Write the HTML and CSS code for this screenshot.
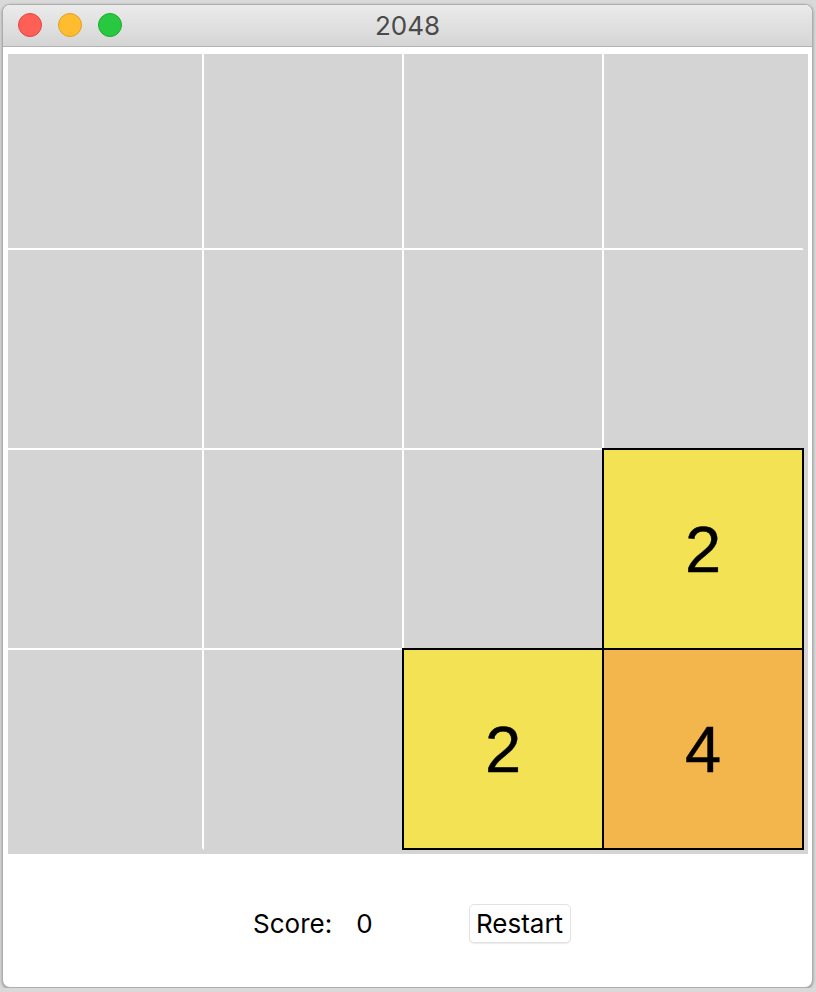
FILE: index.html
```html
<!doctype html>
<html lang="en">
<head>
    <meta charset="UTF-8">
    <title>2048</title>
    <link rel="stylesheet" href="styles.css">
</head>
<body>
    <div id="window">
        <div id="titlebar">
            <div id="lights">
                <span class="light red"></span>
                <span class="light yellow"></span>
                <span class="light green"></span>
            </div>
            <div id="title">2048</div>
        </div>
        <div id="content">
            <div id="board">
                <div class="cell"></div>
                <div class="cell"></div>
                <div class="cell"></div>
                <div class="cell"></div>

                <div class="cell"></div>
                <div class="cell"></div>
                <div class="cell"></div>
                <div class="cell"></div>

                <div class="cell"></div>
                <div class="cell"></div>
                <div class="cell"></div>
                <div class="cell tile t2">2</div>

                <div class="cell"></div>
                <div class="cell"></div>
                <div class="cell tile t2">2</div>
                <div class="cell tile t4">4</div>
            </div>
            <div id="footer">
                <span id="score-label">Score:</span>
                <span id="score">0</span>
                <button id="restart">Restart</button>
            </div>
        </div>
    </div>
</body>
</html>
```

FILE: styles.css
```css
*{
    margin:0;
    padding:0;
    box-sizing: border-box;
}
body{
    background: #d9d9d9;
    font-family: Inter, "Noto Sans", sans-serif;
}
#window{
    margin: 4px 0 0 2px;
    width: 811px;
    height: 984px;
    background: #ffffff;
    border: 1px solid #aeaeae;
    border-radius: 8px;
    overflow: hidden;
    box-shadow: 0 1px 3px rgba(0,0,0,0.35);
}
#titlebar{
    position: relative;
    height: 42px;
    background: linear-gradient(#ebebeb, #d5d5d5);
    border-bottom: 1px solid #b3b3b3;
    display: flex;
    align-items: center;
    justify-content: center;
}
#lights{
    position: absolute;
    left: 15px;
    top: 8px;
    display: flex;
    gap: 16px;
}
.light{
    width: 24px;
    height: 24px;
    border-radius: 50%;
}
.red{
    background: #fe5f57;
    border: 1px solid #e1463f;
}
.yellow{
    background: #febc2e;
    border: 1px solid #dfa023;
}
.green{
    background: #28c840;
    border: 1px solid #1cac2c;
}
#title{
    font-size: 26px;
    color: #4a4a4a;
}
#content{
    padding: 7px 0 0 5px;
}
#board{
    width: 800px;
    height: 800px;
    background: #d4d4d4;
    display: grid;
    grid-template-columns: 196px 200px 200px 200px;
    grid-template-rows: 196px 200px 200px 200px;
}
.cell{
    border-right: 2px solid #ffffff;
    border-bottom: 2px solid #ffffff;
}
.cell:nth-child(4n){
    border-right-color: transparent;
}
.cell:nth-child(n+13){
    border-bottom-color: transparent;
}
.tile{
    margin: -2px 0 0 -2px;
    border: 2px solid #000000 !important;
    display: flex;
    align-items: center;
    justify-content: center;
    font-family: "Liberation Sans", Arial, sans-serif;
    font-size: 65px;
    color: #000000;
    -webkit-text-stroke: 0.4px #000000;
}
.t2{
    background: #f3e253;
}
.t4{
    background: #f3b64c;
}
#footer{
    margin-top: 50px;
    padding-left: 245px;
    display: flex;
    align-items: center;
    font-size: 26px;
    color: #000000;
}
#score{
    margin-left: 24px;
    margin-right: 96px;
}
#restart{
    font-family: inherit;
    font-size: 26px;
    width: 102px;
    height: 39px;
    background: #ffffff;
    border: 1px solid #e2e2e2;
    border-radius: 5px;
    box-shadow: 0 1px 1px rgba(0,0,0,0.08);
    color: #000000;
}
```
